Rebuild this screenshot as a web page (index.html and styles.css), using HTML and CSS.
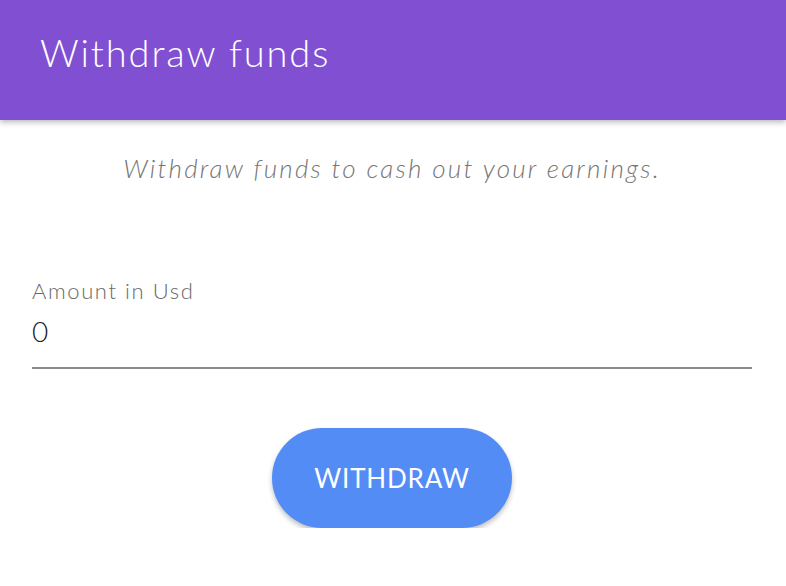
FILE: index.html
```html
<!DOCTYPE html>
<html>
<head>
<meta charset="utf-8">
<link rel="stylesheet" href="styles.css">
</head>
<body>
<header class="appbar">
  <h1 class="title">Withdraw funds</h1>
</header>
<main class="content">
  <p class="intro">Withdraw funds to cash out your earnings.</p>
  <div class="field">
    <label class="label" for="amount">Amount in Usd</label>
    <input class="input" id="amount" type="text" value="0">
  </div>
  <div class="actions">
    <button class="btn">WITHDRAW</button>
  </div>
</main>
</body>
</html>
```

FILE: styles.css
```css
html, body {
  margin: 0;
  padding: 0;
  background: #ffffff;
  font-family: "Lato", "Noto Sans", sans-serif;
}
.appbar {
  height: 120px;
  background: #8150d2;
  display: flex;
  align-items: center;
  padding: 0 40px;
  box-shadow: 0 2px 6px rgba(0,0,0,0.3);
  position: relative;
}
.title {
  margin: 0;
  color: #ffffff;
  font-size: 38px;
  font-weight: 300;
  letter-spacing: 1.9px;
  padding-bottom: 16px;
}
.content {
  padding: 0 34px 0 32px;
}
.intro {
  margin: 32px 0 0;
  text-align: center;
  font-style: italic;
  font-size: 26px;
  font-weight: 300;
  color: #767676;
  letter-spacing: 2.2px;
}
.field {
  margin-top: 95px;
  display: flex;
  flex-direction: column;
}
.label {
  font-size: 22px;
  font-weight: 300;
  color: #6a6a6a;
  line-height: 24px;
  letter-spacing: 1.6px;
}
.input {
  border: none;
  border-bottom: 2px solid #8a8a8a;
  outline: none;
  font-family: inherit;
  font-size: 28px;
  font-weight: 300;
  color: #222;
  padding: 11px 0 19px;
  margin-top: 0;
  background: transparent;
}
.actions {
  display: flex;
  justify-content: center;
  margin-top: 59px;
}
.btn {
  width: 240px;
  height: 100px;
  border-radius: 50px;
  border: none;
  background: #548cf6;
  color: #ffffff;
  font-family: inherit;
  font-size: 26px;
  letter-spacing: 0.8px;
  box-shadow: 0 3px 5px rgba(0,0,0,0.25);
}
```
